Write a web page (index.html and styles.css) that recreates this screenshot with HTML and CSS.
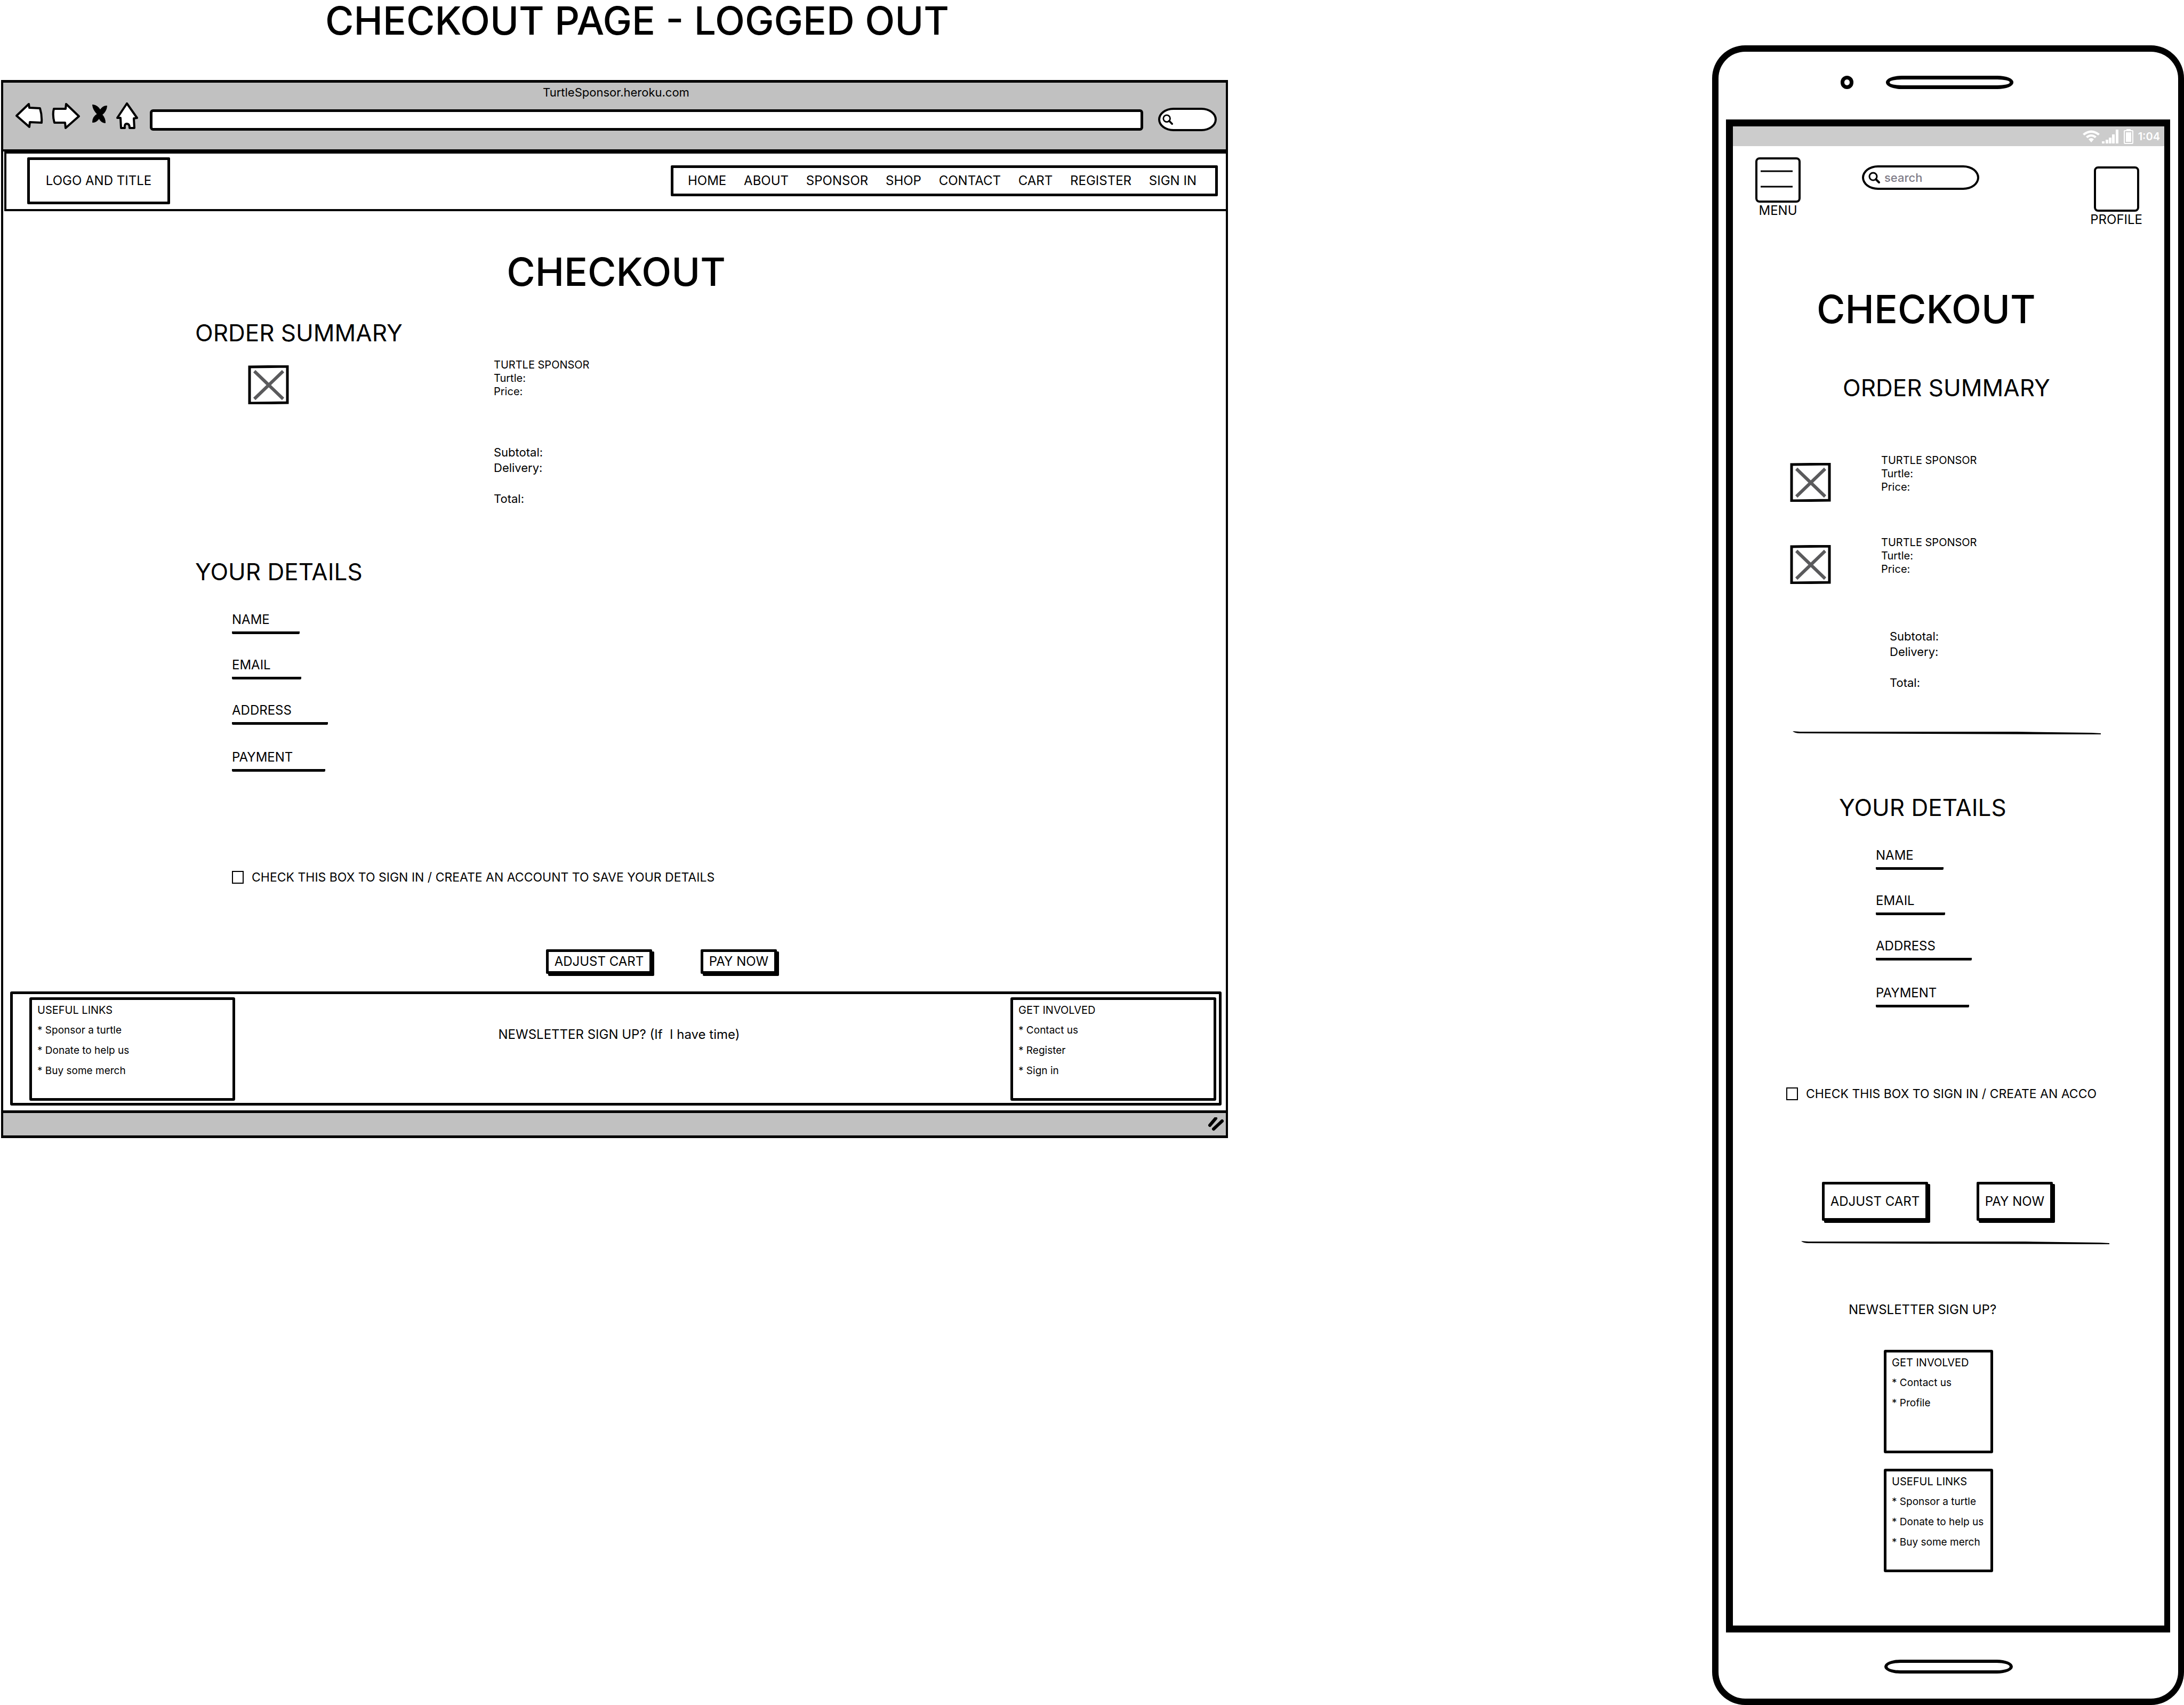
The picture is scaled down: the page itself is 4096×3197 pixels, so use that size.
FILE: index.html
```html
<!DOCTYPE html>
<html lang="en">
<head>
<meta charset="utf-8">
<title>Checkout page - logged out</title>
<link rel="stylesheet" href="styles.css">
</head>
<body>
<svg class="defs" aria-hidden="true">
  <symbol id="picture" viewBox="0 0 77 73">
    <path d="M12 11 66 63M66 11 12 63" fill="none" stroke="#5a5a5c" stroke-width="6"/>
    <path d="M3 3 74 2V70L3 71Z" fill="none" stroke="#000" stroke-width="5"/>
  </symbol>
  <symbol id="rule" viewBox="0 0 578 6" preserveAspectRatio="none">
    <path d="M0 0 14 1 420 1 560 3 578 4V6L560 6 250 5 14 4Q4 4 0 0Z"/>
  </symbol>
  <symbol id="magnifier" viewBox="0 0 22 22">
    <ellipse cx="9" cy="9" rx="7" ry="7" fill="none" stroke="#000" stroke-width="3"/>
    <path d="M14 14 20 20" stroke="#000" stroke-width="4" stroke-linecap="round"/>
  </symbol>
</svg>
<div class="board">
  <section class="desktop">
    <h1 class="board-title">CHECKOUT PAGE - LOGGED OUT</h1>
    <div class="window">
      <div class="toolbar">
        <p class="window-title">TurtleSponsor.heroku.com</p>
        <div class="controls">
          <button class="tool" type="button" aria-label="Back"><svg width="52" height="50"><path d="M2 25 25 3 26 10 46 11Q50 24 49 38L27 37 26 46Z"/></svg></button>
          <button class="tool" type="button" aria-label="Forward"><svg width="56" height="50"><path d="M51 26 27 3 26 12 4 12Q1 23 5 38L25 38 26 48Z"/></svg></button>
          <button class="tool" type="button" aria-label="Stop"><svg width="33" height="50"><path class="cross" d="M5 5Q14 6 19 15 24 7 31 7 30 17 22 23 28 30 28 38 20 37 17 29 12 37 5 37 5 27 14 22 6 14 5 5Z"/></svg></button>
          <button class="tool" type="button" aria-label="Home"><svg width="47" height="52"><path d="M20 2 39 29 33 30 34 48 25 48Q25 40 20 40T16 48L9 48 8 29 2 29Z"/></svg></button>
          <input class="address" type="text" aria-label="Address">
          <label class="finder finder-small"><svg width="20" height="22"><use href="#magnifier"/></svg><input type="text" aria-label="Search the web"></label>
        </div>
      </div>
      <header class="site-header">
        <a class="logo" href="#">LOGO AND TITLE</a>
        <nav class="site-nav">
          <a href="#">HOME</a><a href="#">ABOUT</a><a href="#">SPONSOR</a><a href="#">SHOP</a><a href="#">CONTACT</a><a href="#">CART</a><a href="#">REGISTER</a><a href="#">SIGN IN</a>
        </nav>
      </header>
      <main class="page">
        <h1 class="page-title">CHECKOUT</h1>
        <h2 class="heading">ORDER SUMMARY</h2>
        <div class="order">
          <svg class="picture"><use href="#picture"/></svg>
          <div>
            <p class="item">TURTLE SPONSOR<br>Turtle:<br>Price:</p>
            <p class="totals">Subtotal:<br>Delivery:<br><br>Total:</p>
          </div>
        </div>
        <h2 class="heading">YOUR DETAILS</h2>
        <form class="form">
          <div class="field"><label for="d-name">NAME</label><input id="d-name" type="text"></div>
          <div class="field email"><label for="d-email">EMAIL</label><input id="d-email" type="email"></div>
          <div class="field street"><label for="d-address">ADDRESS</label><input id="d-address" type="text"></div>
          <div class="field payment"><label for="d-payment">PAYMENT</label><input id="d-payment" type="text"></div>
          <div class="consent"><input id="d-save" type="checkbox"><label for="d-save">CHECK THIS BOX TO SIGN IN / CREATE AN ACCOUNT TO SAVE YOUR DETAILS</label></div>
          <div class="actions"><button class="btn adjust" type="button">ADJUST CART</button><button class="btn pay" type="button">PAY NOW</button></div>
        </form>
      </main>
      <footer class="site-footer">
        <div class="links">
          <h3>USEFUL LINKS</h3>
          <ul><li><a href="#">* Sponsor a turtle</a></li><li><a href="#">* Donate to help us</a></li><li><a href="#">* Buy some merch</a></li></ul>
        </div>
        <p class="newsletter">NEWSLETTER SIGN UP? (If  I have time)</p>
        <div class="links">
          <h3>GET INVOLVED</h3>
          <ul><li><a href="#">* Contact us</a></li><li><a href="#">* Register</a></li><li><a href="#">* Sign in</a></li></ul>
        </div>
      </footer>
      <div class="statusbar"><svg width="30" height="26"><path d="M4 15 15 2M11 22 27 7" fill="none" stroke="#000" stroke-width="6" stroke-linecap="round"/></svg></div>
    </div>
  </section>

  <section class="phone">
    <div class="phone-head"><span class="camera"></span><span class="speaker"></span></div>
    <div class="screen">
      <div class="phone-status">
        <svg width="96" height="30" fill="#fff">
          <path d="M1 10Q17-3 33 10L30 13Q17 3 4 13ZM7 15Q17 7 27 15L24 18Q17 12 10 18ZM12 20Q17 16 22 20L17 26Z"/>
          <path d="M37 24h5v4h-5zM44 21h5v7h-5zM50 17h5v11h-5zM56 11h5v17h-5zM63 2h5v26h-5z"/>
          <path fill-rule="evenodd" d="M83 1h8v2h3q2 0 2 2V26q0 3-2 3H80q-2 0-2-3V5q0-2 2-2h3ZM80 5v22h14V5ZM82 7h10v18H82Z"/>
        </svg>
        <span>1:04</span>
      </div>
      <div class="phone-bar">
        <div class="menu"><button class="tile" type="button" id="menu" aria-label="Menu"><svg width="60" height="34"><path d="M0 2H60M0 31H60" stroke="#000" stroke-width="3"/></svg></button><label for="menu">MENU</label></div>
        <label class="finder"><svg width="22" height="22"><use href="#magnifier"/></svg><input type="text" placeholder="search" aria-label="Search"></label>
        <div class="profile"><button class="tile" type="button" id="profile" aria-label="Profile"></button><label for="profile">PROFILE</label></div>
      </div>
      <main class="page">
        <h1 class="page-title">CHECKOUT</h1>
        <h2 class="heading order-heading">ORDER SUMMARY</h2>
        <div class="orders">
          <div class="order">
            <svg class="picture"><use href="#picture"/></svg>
            <p class="item">TURTLE SPONSOR<br>Turtle:<br>Price:</p>
          </div>
          <div class="order">
            <svg class="picture"><use href="#picture"/></svg>
            <p class="item">TURTLE SPONSOR<br>Turtle:<br>Price:</p>
          </div>
        </div>
        <p class="totals">Subtotal:<br>Delivery:<br><br>Total:</p>
        <svg class="rule"><use href="#rule"/></svg>
        <h2 class="heading details-heading">YOUR DETAILS</h2>
        <form class="form">
          <div class="field"><label for="p-name">NAME</label><input id="p-name" type="text"></div>
          <div class="field email"><label for="p-email">EMAIL</label><input id="p-email" type="email"></div>
          <div class="field street"><label for="p-address">ADDRESS</label><input id="p-address" type="text"></div>
          <div class="field payment"><label for="p-payment">PAYMENT</label><input id="p-payment" type="text"></div>
          <div class="consent"><input id="p-save" type="checkbox"><label for="p-save">CHECK THIS BOX TO SIGN IN / CREATE AN ACCO</label></div>
          <div class="actions"><button class="btn adjust" type="button">ADJUST CART</button><button class="btn pay" type="button">PAY NOW</button></div>
        </form>
        <svg class="rule rule-low"><use href="#rule"/></svg>
        <p class="newsletter">NEWSLETTER SIGN UP?</p>
        <div class="link-stack">
          <div class="links">
            <h3>GET INVOLVED</h3>
            <ul><li><a href="#">* Contact us</a></li><li><a href="#">* Profile</a></li></ul>
          </div>
          <div class="links">
            <h3>USEFUL LINKS</h3>
            <ul><li><a href="#">* Sponsor a turtle</a></li><li><a href="#">* Donate to help us</a></li><li><a href="#">* Buy some merch</a></li></ul>
          </div>
        </div>
      </main>
    </div>
    <div class="phone-foot"><span class="home-key"></span></div>
  </section>
</div>
</body>
</html>
```
FILE: styles.css
```css
*, *::before, *::after { box-sizing: border-box; }

body {
  margin: 0;
  background: #fff;
  color: #000;
  font: 24px/28px Inter, "Liberation Sans", sans-serif;
}

h1, h2, h3, p, ul { margin: 0; padding: 0; font-weight: 400; }
ul { list-style: none; }
a { color: inherit; text-decoration: none; }
button, input { margin: 0; padding: 0; border: 0; background: none; color: inherit; font: inherit; }
svg { display: block; }
.defs { position: absolute; width: 0; height: 0; }

.board {
  display: grid;
  grid-template-columns: 2303fr 908fr 885fr;
  align-items: start;
}

/* Shared page parts */
.page-title { font-size: 73px; font-weight: 500; line-height: 88px; }
.heading { font-size: 44px; line-height: 52px; }
.order { display: grid; align-items: start; }
.picture { width: 77px; height: 73px; }
.item { font-size: 20px; line-height: 25px; }
.totals { font-size: 22px; line-height: 29px; }

.field {
  display: flex;
  width: 127px;
  height: 41px;
  margin-bottom: 44px;
  border-bottom: 5px solid #000;
  border-radius: 2px;
}
.field input { flex: 1; min-width: 0; height: 28px; }
.email { width: 130px; }
.street { width: 180px; margin-bottom: 47px; }
.payment { width: 175px; margin-bottom: 0; }

.consent { display: flex; align-items: center; gap: 15px; font-size: 23px; white-space: nowrap; }
.consent input {
  flex: none;
  width: 22px;
  height: 24px;
  appearance: none;
  border: 2px solid #000;
}

.actions { display: flex; gap: 91px; }
.btn {
  height: 46px;
  border: 5px solid #000;
  border-radius: 2px;
  background: #fff;
  box-shadow: 4px 4px 0 #000;
  white-space: nowrap;
}
.adjust { width: 199px; }
.pay { width: 143px; }

.links {
  height: 194px;
  padding-left: 10px;
  border: 5px solid #000;
  border-radius: 3px;
  font-size: 19px;
  line-height: 38px;
  white-space: nowrap;
}
.links h3 { font-size: 20px; }

.finder {
  display: flex;
  align-items: center;
  gap: 8px;
  width: 220px;
  height: 46px;
  padding-left: 8px;
  border: 4px solid #000;
  border-radius: 30px / 23px;
  background: #fff;
}
.finder svg { flex: none; }
.finder input { flex: 1; min-width: 0; font-size: 22px; font-weight: 500; }
.finder input::placeholder { color: #7f7c88; opacity: 1; }

/* Browser window */
.board-title {
  margin-bottom: 72px;
  padding-left: 610px;
  font-size: 73px;
  font-weight: 500;
  line-height: 78px;
  white-space: nowrap;
}
.window { margin-left: 2px; border: 5px solid #000; border-width: 5px 4px; }
.toolbar { padding: 4px 17px 33px 23px; border-bottom: 4px solid #000; background: #c1c1c1; }
.window-title { font-size: 22px; text-align: center; }
.controls { display: flex; align-items: flex-start; gap: 16px; height: 55px; margin-top: 5px; }
.tool path { fill: #fff; stroke: #000; stroke-width: 4; stroke-linejoin: round; }
.tool .cross { fill: #000; stroke-width: 2; }
.address { flex: 1; height: 40px; margin-top: 13px; border: 5px solid #000; border-radius: 6px; background: #fff; }
.finder-small { width: 110px; height: 44px; margin: 10px 0 0 12px; padding-left: 4px; }

.site-header {
  display: flex;
  align-items: center;
  justify-content: space-between;
  height: 112px;
  margin: 0 -4px 0 2px;
  padding: 0 15px 2px 39px;
  border: 4px solid #000;
}
.logo {
  display: flex;
  align-items: center;
  justify-content: center;
  width: 268px;
  height: 88px;
  border: 5px solid #000;
  border-radius: 2px;
}
.site-nav {
  display: flex;
  align-items: center;
  justify-content: space-between;
  width: 1026px;
  height: 58px;
  padding: 0 35px 0 27px;
  border: 5px solid #000;
  border-radius: 2px;
}

.desktop .page-title { margin: 70px 0 44px; padding-left: 6px; text-align: center; }
.desktop .heading { padding-left: 360px; }
.desktop .order { grid-template-columns: 461px auto; padding-left: 459px; margin: 22px 0 96px; }
.desktop .picture { margin-top: 13px; }
.desktop .totals { margin-top: 87px; }
.desktop .form { padding: 50px 0 0 429px; }
.desktop .consent { margin: 184px 0 121px; }
.desktop .actions { margin-left: 589px; }

.site-footer {
  display: flex;
  justify-content: space-between;
  align-items: flex-start;
  height: 214px;
  margin: 33px 8px 9px 13px;
  padding: 6px 5px 0 31px;
  border: 5px solid #000;
  border-radius: 3px;
}
.site-footer .links { width: 386px; }
.site-footer .newsletter { margin: 56px 14px 0 0; white-space: pre; }

.statusbar {
  display: flex;
  justify-content: flex-end;
  align-items: center;
  height: 47px;
  padding-right: 4px;
  border-top: 5px solid #000;
  background: #c1c1c1;
}

/* Phone */
.phone {
  grid-column: 3;
  margin-top: 85px;
  border: 12px solid #000;
  border-width: 12px 11px 12px 12px;
  border-radius: 62px;
}
.phone-head { display: flex; gap: 61px; height: 127px; padding: 45px 0 0 229px; }
.camera { width: 24px; height: 25px; border: 7px solid #000; border-radius: 12px; }
.speaker { width: 239px; height: 25px; border: 7px solid #000; border-radius: 30px / 12px; }
.screen { margin: 0 15px 0 14px; border: 13px solid #000; border-right-width: 11px; }
.phone-status {
  display: flex;
  align-items: center;
  justify-content: flex-end;
  gap: 9px;
  height: 37px;
  padding-right: 8px;
  background: #ccc;
  color: #fff;
  font-size: 20px;
  font-weight: 600;
}
.phone-bar { display: flex; align-items: flex-start; padding: 21px 41px 0 42px; }
.menu, .profile { display: flex; flex-direction: column; align-items: center; gap: 1px; }
.profile { margin: 17px 0 0 auto; }
.tile {
  display: flex;
  align-items: center;
  width: 85px;
  height: 85px;
  padding: 0 0 4px 6px;
  border: 4px solid #000;
  border-radius: 8px;
}
.phone .finder { margin: 15px 0 0 115px; }

.phone .page { padding-bottom: 100px; }
.phone .page-title { margin: 110px 0 77px; padding-left: 157px; }
.order-heading { padding-left: 206px; }
.details-heading { padding-left: 199px; }
.orders { display: grid; gap: 64px; margin: 98px 0 84px 107px; }
.phone .order { grid-template-columns: 171px auto; }
.phone .picture { margin-top: 17px; }
.phone .totals { padding-left: 294px; }
.rule { width: 578px; height: 6px; margin: 76px 0 111px 112px; }
.phone .form { padding: 50px 0 0 268px; }
.phone .consent { margin: 148px 0 151px -168px; }
.phone .actions { margin-left: -101px; }
.phone .btn { height: 73px; }
.rule-low { margin: 38px 0 109px 128px; }
.phone .newsletter { padding-left: 217px; }
.link-stack { display: grid; gap: 29px; width: 205px; margin: 61px 0 0 283px; }
.phone-foot { padding: 51px 0 47px 311px; }
.home-key { display: block; width: 241px; height: 26px; border: 6px solid #000; border-radius: 30px / 13px; }
```
